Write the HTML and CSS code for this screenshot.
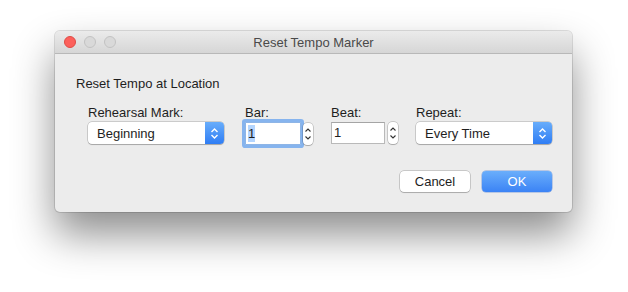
FILE: index.html
```html
<!DOCTYPE html>
<html>
<head>
<meta charset="utf-8">
<link rel="stylesheet" href="styles.css">
</head>
<body>
<div class="stage">
  <div class="window">
    <div class="titlebar">
      <div class="lights">
        <span class="light red"></span>
        <span class="light gray"></span>
        <span class="light gray"></span>
      </div>
      <div class="title">Reset Tempo Marker</div>
    </div>
    <div class="content">
      <div class="heading">Reset Tempo at Location</div>
      <div class="fields">
        <div class="col col-mark">
          <div class="label">Rehearsal Mark:</div>
          <div class="popup">
            <span class="popup-text">Beginning</span>
            <span class="popup-arrows">
              <svg width="9" height="13" viewBox="0 0 9 13"><path d="M1.5 5 L4.5 2 L7.5 5 M1.5 8 L4.5 11 L7.5 8" fill="none" stroke="#fff" stroke-width="1.4"/></svg>
            </span>
          </div>
        </div>
        <div class="col col-bar">
          <div class="label">Bar:</div>
          <div class="num-row">
            <div class="field focused"><span class="sel">1</span></div>
            <div class="stepper">
              <svg width="8" height="16" viewBox="0 0 8 16"><path d="M1.5 5.5 L4 3 L6.5 5.5 M1.5 10.5 L4 13 L6.5 10.5" fill="none" stroke="#333" stroke-width="1.1"/></svg>
            </div>
          </div>
        </div>
        <div class="col col-beat">
          <div class="label">Beat:</div>
          <div class="num-row">
            <div class="field">1</div>
            <div class="stepper">
              <svg width="8" height="16" viewBox="0 0 8 16"><path d="M1.5 5.5 L4 3 L6.5 5.5 M1.5 10.5 L4 13 L6.5 10.5" fill="none" stroke="#333" stroke-width="1.1"/></svg>
            </div>
          </div>
        </div>
        <div class="col col-repeat">
          <div class="label">Repeat:</div>
          <div class="popup">
            <span class="popup-text">Every Time</span>
            <span class="popup-arrows">
              <svg width="9" height="13" viewBox="0 0 9 13"><path d="M1.5 5 L4.5 2 L7.5 5 M1.5 8 L4.5 11 L7.5 8" fill="none" stroke="#fff" stroke-width="1.4"/></svg>
            </span>
          </div>
        </div>
      </div>
      <div class="buttons">
        <div class="btn cancel">Cancel</div>
        <div class="btn ok">OK</div>
      </div>
    </div>
  </div>
</div>
</body>
</html>
```
FILE: styles.css
```css
* { box-sizing: border-box; }
html, body {
  margin: 0;
  padding: 0;
  background: #ffffff;
  font-family: "Liberation Sans", Arial, sans-serif;
  font-size: 13px;
  color: #222;
}
.stage {
  padding: 31px 0 0 55px;
  height: 292px;
}
.window {
  width: 517px;
  height: 181px;
  background: #ececec;
  border-radius: 5px;
  box-shadow: 0 0 0 1px rgba(0,0,0,0.12), 0 22px 42px rgba(0,0,0,0.45);
  overflow: hidden;
  display: flex;
  flex-direction: column;
}
.titlebar {
  height: 23px;
  background: linear-gradient(#ebebeb, #d6d6d6);
  border-bottom: 1px solid #b8b8b8;
  display: flex;
  align-items: center;
  position: relative;
}
.lights {
  display: flex;
  gap: 8px;
  padding-left: 9px;
}
.light {
  width: 12px;
  height: 12px;
  border-radius: 50%;
}
.light.red {
  background: #fc605b;
  border: 1px solid #de4b45;
}
.light.gray {
  background: #d9d9d9;
  border: 1px solid #c2c2c2;
}
.title {
  position: absolute;
  left: 0;
  right: 0;
  top: 0;
  line-height: 23px;
  text-align: center;
  color: #4a4a4a;
  pointer-events: none;
}
.content {
  flex: 1;
  padding: 22px 20px 0 21px;
  display: flex;
  flex-direction: column;
}
.heading {
  line-height: 16px;
  color: #1e1e1e;
}
.fields {
  display: flex;
  margin-top: 13px;
  padding-left: 12px;
}
.label {
  line-height: 16px;
  height: 17px;
  color: #1e1e1e;
}
.col-mark { width: 136px; }
.col-bar { margin-left: 19px; }
.col-beat { margin-left: 18px; }
.col-repeat { margin-left: 18px; width: 136px; }
.col-bar .label { padding-left: 2px; }

.popup {
  height: 22px;
  background: #fff;
  border-radius: 4px;
  box-shadow: 0 0 0 0.5px rgba(0,0,0,0.28), 0 1px 1px rgba(0,0,0,0.18);
  display: flex;
  align-items: center;
  overflow: hidden;
}
.popup-text {
  flex: 1;
  padding-left: 9px;
  color: #1e1e1e;
}
.popup-arrows {
  width: 19px;
  height: 100%;
  background: linear-gradient(#68adfb, #2f7df4);
  display: flex;
  align-items: center;
  justify-content: center;
}
.num-row {
  display: flex;
  align-items: center;
  gap: 3px;
}
.field {
  height: 22px;
  width: 54px;
  background: #fff;
  border: 1px solid #b9b9b9;
  border-top-color: #a5a5a5;
  padding-left: 2px;
  line-height: 20px;
  color: #1e1e1e;
}
.field.focused {
  width: 56px;
  margin-left: 2px;
  border-color: #8eb5e6;
  box-shadow: 0 0 0 3px #86b4ee;
  border-radius: 1px;
  height: 23px;
}
.sel {
  background: #b4d5fe;
  display: inline-block;
  line-height: 17px;
  margin-top: 2px;
}
.col-bar .num-row { gap: 2px; }
.stepper {
  width: 10px;
  height: 22px;
  background: #fff;
  border-radius: 4px;
  box-shadow: 0 0 0 0.5px rgba(0,0,0,0.3), 0 1px 1px rgba(0,0,0,0.15);
  display: flex;
  align-items: center;
  justify-content: center;
}
.buttons {
  display: flex;
  justify-content: flex-end;
  gap: 12px;
  margin-top: 26px;
}
.btn {
  width: 70px;
  height: 21px;
  border-radius: 4px;
  text-align: center;
  line-height: 21px;
}
.cancel {
  background: #fff;
  color: #1e1e1e;
  box-shadow: 0 0 0 0.5px rgba(0,0,0,0.3), 0 1px 1px rgba(0,0,0,0.15);
}
.ok {
  background: linear-gradient(#6aaefb, #3b83f5);
  color: #fff;
  box-shadow: 0 0 0 0.5px rgba(30,90,200,0.5);
}
```
